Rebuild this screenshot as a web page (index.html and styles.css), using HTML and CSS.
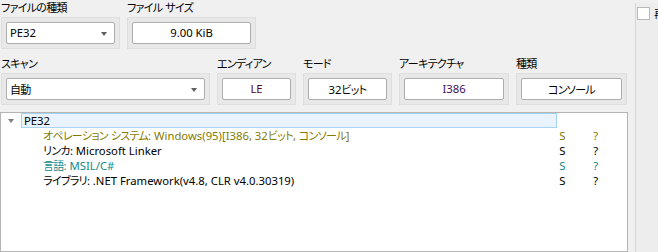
FILE: index.html
```html
<!DOCTYPE html>
<html lang="ja">
<head>
    <meta charset="UTF-8">
    <title>スキャン</title>
    <link rel="stylesheet" href="styles.css">
</head>
<body>
    <div class="window">
        <div class="main">
            <div class="row">
                <div class="field">
                    <div class="label"><span class="ja">ファイルの種類</span></div>
                    <div class="group w-type">
                        <div class="combo">PE32<span class="arrow"></span></div>
                    </div>
                </div>
                <div class="field">
                    <div class="label"><span class="ja">ファイル</span> <span class="ja">サイズ</span></div>
                    <div class="group w-size">
                        <div class="value">9.00 KiB</div>
                    </div>
                </div>
            </div>

            <div class="row">
                <div class="field">
                    <div class="label"><span class="ja">スキャン</span></div>
                    <div class="group w-scan">
                        <div class="combo"><span class="ja">自動</span><span class="arrow"></span></div>
                    </div>
                </div>
                <div class="field">
                    <div class="label"><span class="ja">エンディアン</span></div>
                    <div class="group w-endian">
                        <div class="value red">LE</div>
                    </div>
                </div>
                <div class="field">
                    <div class="label"><span class="ja">モード</span></div>
                    <div class="group w-mode">
                        <div class="value">32<span class="ja">ビット</span></div>
                    </div>
                </div>
                <div class="field">
                    <div class="label"><span class="ja">アーキテクチャ</span></div>
                    <div class="group w-arch">
                        <div class="value purple">I386</div>
                    </div>
                </div>
                <div class="field">
                    <div class="label"><span class="ja">種類</span></div>
                    <div class="group w-kind">
                        <div class="value"><span class="ja">コンソール</span></div>
                    </div>
                </div>
            </div>

            <div class="tree">
                <div class="node">
                    <span class="expander"></span>
                    <span class="selected">PE32</span>
                </div>
                <div class="item olive">
                    <span class="name"><span class="ja">オペレーション</span> <span class="ja">システム</span>: Windows(95)[I386, 32<span class="ja">ビット</span>, <span class="ja">コンソール</span>]</span>
                    <span class="flag">S</span>
                    <span class="flag">?</span>
                </div>
                <div class="item">
                    <span class="name"><span class="ja">リンカ</span>: Microsoft Linker</span>
                    <span class="flag">S</span>
                    <span class="flag">?</span>
                </div>
                <div class="item teal">
                    <span class="name"><span class="ja">言語</span>: MSIL/C#</span>
                    <span class="flag">S</span>
                    <span class="flag">?</span>
                </div>
                <div class="item">
                    <span class="name"><span class="ja">ライブラリ</span>: .NET Framework(v4.8, CLR v4.0.30319)</span>
                    <span class="flag">S</span>
                    <span class="flag">?</span>
                </div>
            </div>
        </div>

        <div class="side">
            <label class="check"><span class="box"></span><span class="ja">再帰スキャン</span></label>
        </div>
    </div>
</body>
</html>
```

FILE: styles.css
```css
body {
    margin: 0;
    padding: 0;
    background-color: #f0f0f0;
    font-family: "Noto Sans", "Noto Sans CJK JP", sans-serif;
    font-size: 11.3px;
    color: #000000;
    overflow: hidden;
}

/* Japanese runs are set a little smaller and tighter, like Meiryo UI */
.ja {
    font-family: "Noto Sans CJK JP", sans-serif;
    font-size: 11px;
    letter-spacing: -0.7px;
    font-feature-settings: "palt";
}

.window {
    display: flex;
    height: 252px;
    overflow: hidden;
}

.main {
    width: 628px;
    display: flex;
    flex-direction: column;
}

.row {
    display: flex;
    gap: 7px;
    padding-left: 1px;
    margin-bottom: 7px;
}

.label {
    height: 17px;
    line-height: 15px;
    white-space: nowrap;
}

.group {
    background-color: #e8e8e8;
    border: 1px solid #dedede;
    padding: 4px;
}

.w-type { width: 109px; }
.w-size { width: 119px; }
.w-scan { width: 199px; }
.w-endian { width: 69px; }
.w-mode { width: 79px; }
.w-arch { width: 100px; }
.w-kind { width: 101px; }

.combo, .value {
    box-sizing: border-box;
    height: 22px;
    line-height: 20px;
    background-color: #ffffff;
    border: 1px solid #adadad;
    border-radius: 2px;
    white-space: nowrap;
}

.combo {
    position: relative;
    padding-left: 3px;
}

.combo .arrow {
    position: absolute;
    right: 7px;
    top: 9px;
    width: 0;
    height: 0;
    border-left: 3px solid transparent;
    border-right: 3px solid transparent;
    border-top: 4px solid #606060;
}

.value {
    text-align: center;
}

.value.red {
    color: #5a0018;
}

.value.purple {
    color: #3a1060;
}

/* result tree */
.tree {
    box-sizing: border-box;
    width: 628px;
    height: 160px;
    background-color: #ffffff;
    border: 1px solid #b4b4b4;
    line-height: 15px;
}

.node {
    display: flex;
    align-items: center;
    height: 15px;
}

.expander {
    width: 0;
    height: 0;
    margin-left: 7px;
    margin-right: 7px;
    border-left: 3px solid transparent;
    border-right: 3px solid transparent;
    border-top: 4px solid #808080;
}

.selected {
    box-sizing: border-box;
    width: 536px;
    height: 15px;
    line-height: 13px;
    padding-left: 2px;
    background-color: #e8f3fd;
    border: 1px solid #a9d3f5;
}

.item {
    display: flex;
    height: 15px;
    padding-left: 42px;
    white-space: nowrap;
}

.item .name {
    width: 518px;
}

.item .flag {
    width: 34px;
}

.olive {
    color: #857a00;
}

.teal {
    color: #0f8c8c;
}

/* right option panel */
.side {
    flex: 1;
    margin-left: 7px;
    margin-top: 3px;
    padding: 4px 0 0 1px;
    background-color: #ededed;
    border-left: 1px solid #d6d6d6;
    overflow: hidden;
    white-space: nowrap;
}

.check {
    display: flex;
    align-items: center;
    gap: 4px;
    line-height: 13px;
}

.check .box {
    flex: none;
    width: 13px;
    height: 13px;
    box-sizing: border-box;
    background-color: #ffffff;
    border: 1px solid #b8b8b8;
}
```
